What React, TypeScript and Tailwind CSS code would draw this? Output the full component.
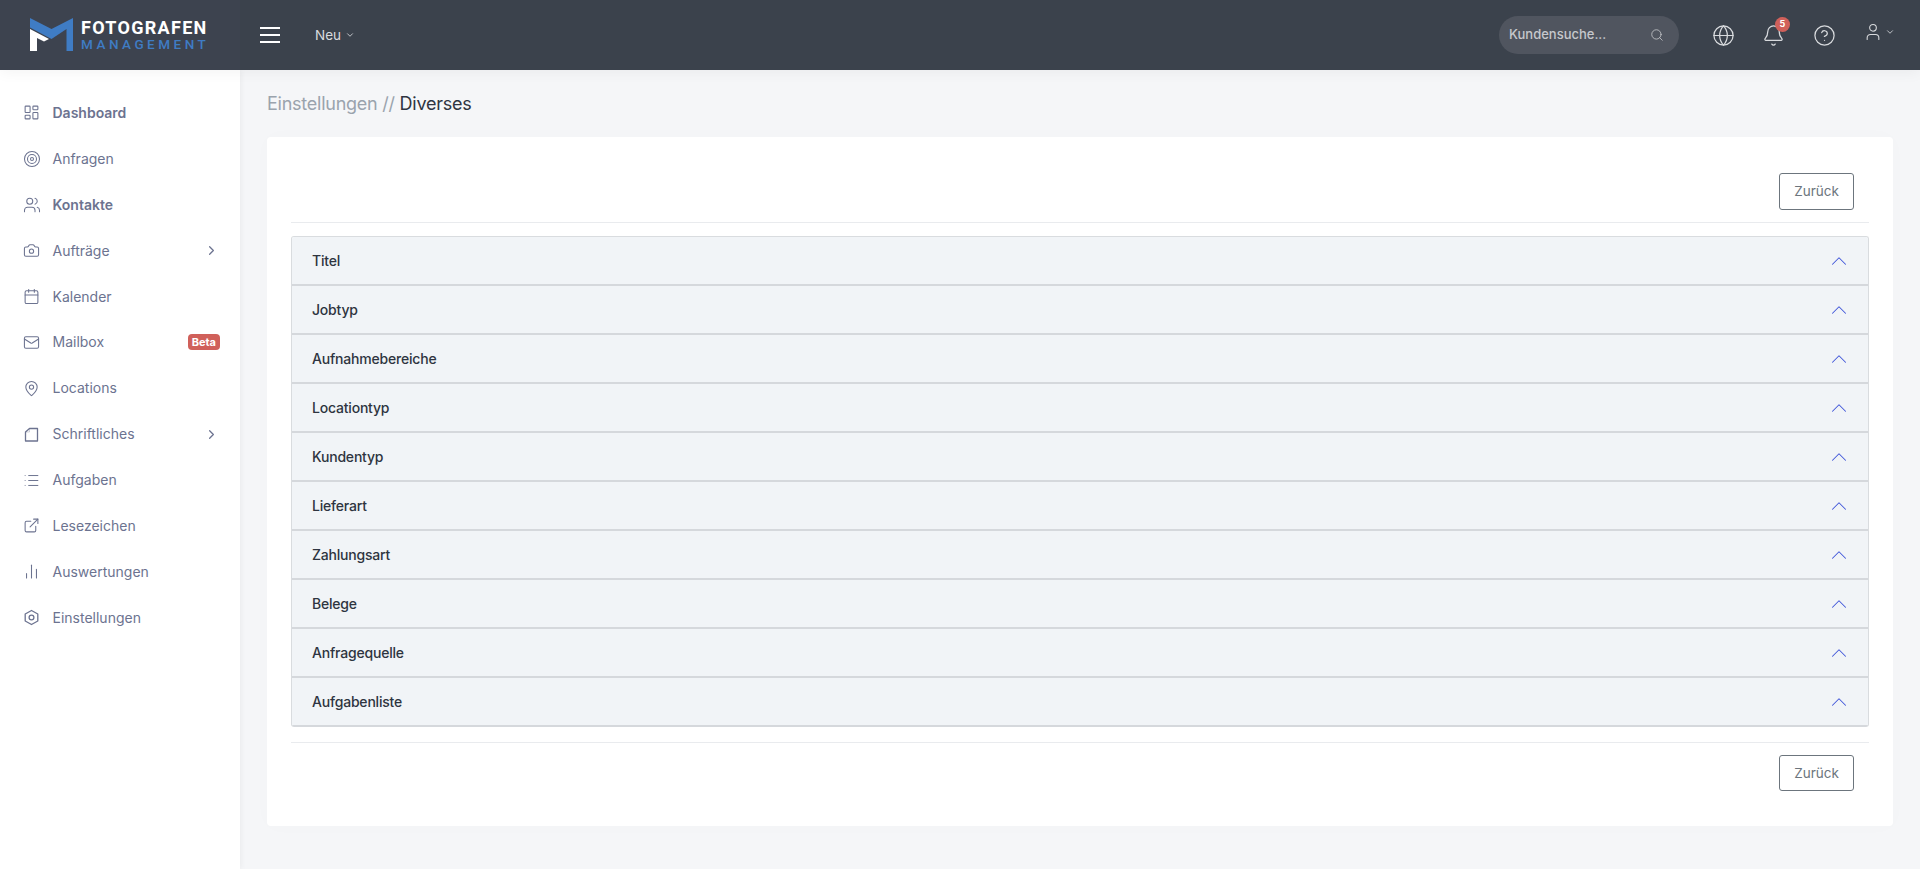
import {
  BarChart2,
  Bell,
  Calendar,
  Camera,
  ChevronDown,
  ChevronRight,
  ChevronUp,
  CircleHelp,
  ExternalLink,
  Globe,
  LayoutDashboard,
  List,
  Mail,
  MapPin,
  Search,
  Target,
  User,
  Users,
} from "lucide-react";
import type { ReactNode } from "react";

const DocIcon = () => (
  <svg width="17" height="17" viewBox="0 0 17 17" fill="none" stroke="currentColor" strokeWidth="1.3">
    <path d="M6.5 2.5 H14.5 V15 H2.5 V6 Z" strokeLinejoin="round" />
    <path d="M6.5 2.5 V6 H2.5" strokeWidth="0.6" opacity="0.5" />
  </svg>
);

const GearIcon = () => (
  <svg width="17" height="17" viewBox="0 0 17 17" fill="none" stroke="currentColor" strokeWidth="1.3">
    <path d="M8.5 1.5 L14.8 5 V12 L8.5 15.5 L2.2 12 V5 Z" strokeLinejoin="round" />
    <circle cx="8.5" cy="8.5" r="2.4" />
  </svg>
);

const Logo = () => (
  <svg width="44" height="34" viewBox="0 0 44 34">
    <path d="M0 0 L21.5 11 L43 0 V33 H36.5 V11 L21.5 21 L0 9.5 Z" fill="#3f7cc4" />
    <path d="M0 11 L19 21 L14 23.5 L7 20 V33 H0 Z" fill="#fff" />
  </svg>
);

type NavItem = { label: string; icon: ReactNode; bold?: boolean; arrow?: boolean; badge?: string };

const navItems: NavItem[] = [
  { label: "Dashboard", icon: <LayoutDashboard size={17} strokeWidth={1.5} />, bold: true },
  { label: "Anfragen", icon: <Target size={18} strokeWidth={1.4} /> },
  { label: "Kontakte", icon: <Users size={18} strokeWidth={1.4} />, bold: true },
  { label: "Aufträge", icon: <Camera size={17} strokeWidth={1.5} />, arrow: true },
  { label: "Kalender", icon: <Calendar size={17} strokeWidth={1.5} /> },
  { label: "Mailbox", icon: <Mail size={17} strokeWidth={1.5} />, badge: "Beta" },
  { label: "Locations", icon: <MapPin size={17} strokeWidth={1.5} /> },
  { label: "Schriftliches", icon: <DocIcon />, arrow: true },
  { label: "Aufgaben", icon: <List size={17} strokeWidth={1.4} /> },
  { label: "Lesezeichen", icon: <ExternalLink size={17} strokeWidth={1.5} /> },
  { label: "Auswertungen", icon: <BarChart2 size={17} strokeWidth={1.5} /> },
  { label: "Einstellungen", icon: <GearIcon /> },
];

const sections = [
  "Titel",
  "Jobtyp",
  "Aufnahmebereiche",
  "Locationtyp",
  "Kundentyp",
  "Lieferart",
  "Zahlungsart",
  "Belege",
  "Anfragequelle",
  "Aufgabenliste",
];

const BackButton = ({ height }: { height: string }) => (
  <button className={`w-[75px] rounded-[3px] border border-[#6c757d] text-[13.5px] text-[#6c757d] ${height}`}>
    Zurück
  </button>
);

export default function App() {
  return (
    <div className="flex h-[869px] flex-col overflow-hidden bg-[#f5f6f8] font-['Inter',sans-serif]">
      <header className="relative z-10 flex h-[70px] shrink-0 items-center bg-[#3b424c] text-[#d9dbde] shadow-[0_2px_14px_rgba(0,0,0,0.05)]">
        <div className="flex h-full w-[240px] shrink-0 items-center bg-[#3d434f] pl-[30px]">
          <Logo />
          <div className="ml-[7px] flex flex-col font-['Roboto',sans-serif]">
            <span className="text-[18px] leading-[19px] font-bold tracking-[1.3px] text-white">FOTOGRAFEN</span>
            <span className="text-[13.5px] leading-[15px] font-medium tracking-[3.5px] text-[#3f7cc4]">MANAGEMENT</span>
          </div>
        </div>
        <div className="ml-5 flex flex-col gap-[5px]">
          <span className="h-0.5 w-5 bg-white" />
          <span className="h-0.5 w-5 bg-white" />
          <span className="h-0.5 w-5 bg-white" />
        </div>
        <div className="ml-[35px] flex items-center gap-1 text-[13.5px]">
          Neu
          <ChevronDown size={10} strokeWidth={2} />
        </div>
        <div className="ml-auto flex h-[38px] w-[180px] items-center justify-between rounded-full bg-[#50555f] pr-[15px] pl-2.5 text-[13px] font-medium text-[#c6c8cc]">
          Kundensuche...
          <Search size={14} strokeWidth={1.4} />
        </div>
        <Globe size={23} strokeWidth={1.3} className="ml-[33px]" />
        <div className="relative ml-[27px] flex">
          <Bell size={23} strokeWidth={1.3} />
          <span className="absolute -top-[7px] -right-[5px] flex h-[15px] w-[15px] items-center justify-center rounded-full bg-[#d0605a] text-[9px] font-bold text-white">
            5
          </span>
        </div>
        <CircleHelp size={23} strokeWidth={1.3} className="ml-[28px]" />
        <div className="mr-[25px] mb-1.5 ml-[27px] flex items-center gap-0.5">
          <User size={20} strokeWidth={1.3} />
          <ChevronDown size={10} strokeWidth={2} />
        </div>
      </header>

      <div className="flex min-h-0 flex-1">
        <nav className="flex w-[240px] shrink-0 flex-col bg-white pt-5 pr-[20px] pl-[23px] text-sm text-[#6c7390] shadow-[1px_0_6px_rgba(0,0,0,0.05)]">
          {navItems.map((item) => (
            <div key={item.label} className="flex h-[45.9px] shrink-0 items-center">
              <span className="flex w-[29.5px] shrink-0">{item.icon}</span>
              <span className={item.bold ? "font-semibold" : ""}>{item.label}</span>
              {item.arrow && <ChevronRight size={15} strokeWidth={2} className="mr-[1px] ml-auto" />}
              {item.badge && (
                <span className="ml-auto rounded-[4px] bg-[#d0605a] px-1 text-[11px] leading-4 font-bold text-white">
                  {item.badge}
                </span>
              )}
            </div>
          ))}
        </nav>

        <main className="min-w-0 flex-1 px-[27px]">
          <h1 className="flex h-[67px] items-center text-lg font-normal tracking-[-0.25px] text-[#2f3542]">
            <span className="text-[#9aa3ad]">Einstellungen //&nbsp;</span>
            Diverses
          </h1>
          <section className="rounded-[4px] bg-white px-6 pt-9 pb-[35px] shadow-[0_0_20px_rgba(0,0,0,0.015)]">
            <div className="flex justify-end border-b border-[#e9ebee] pr-[15px] pb-3">
              <BackButton height="h-[37px]" />
            </div>
            <div className="mt-[13px] overflow-hidden rounded-[3px] border-x border-t border-[#d9dcdf]">
              {sections.map((title) => (
                <div
                  key={title}
                  className="flex h-[49px] items-center justify-between border-b-2 border-[#d5d8dc] bg-[#f1f4f7] pr-[16px] pl-5"
                >
                  <span className="text-sm font-medium tracking-[-0.2px] text-[#2e3440]">{title}</span>
                  <ChevronUp size={26} strokeWidth={0.95} className="text-[#3f55d8]" />
                </div>
              ))}
            </div>
            <div className="mt-[15px] flex justify-end border-t border-[#e9ebee] pt-3 pr-[15px]">
              <BackButton height="h-9" />
            </div>
          </section>
        </main>
      </div>
    </div>
  );
}
